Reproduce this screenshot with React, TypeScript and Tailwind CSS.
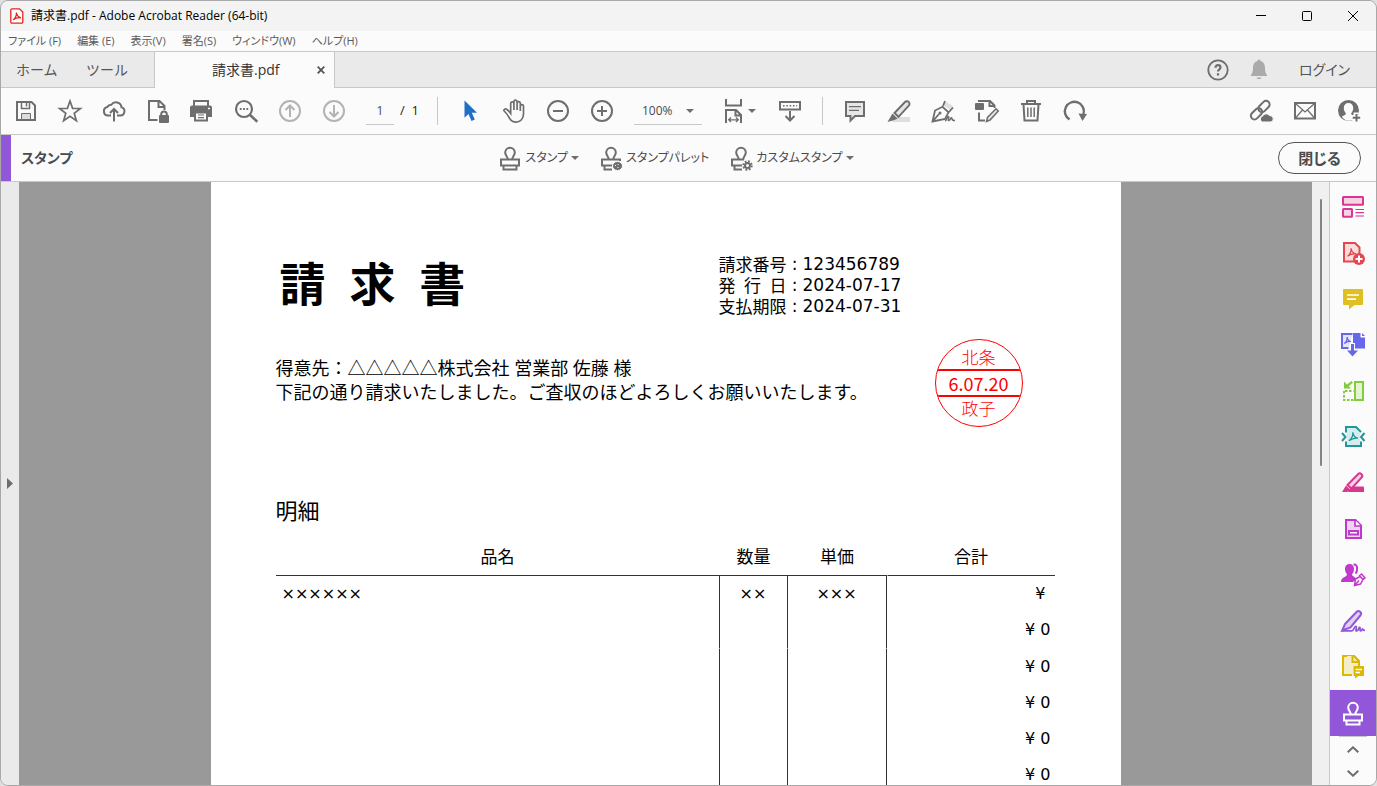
import type { ReactNode } from 'react';

const G = '#6e6e6e';

type IconProps = { children: ReactNode; color?: string; width?: number; size?: string };

function Icon({ children, color = G, width = 2, size = 'size-6' }: IconProps) {
  return (
    <svg viewBox="0 0 24 24" className={`${size} shrink-0 overflow-visible`} fill="none" stroke={color} strokeWidth={width} aria-hidden="true">
      {children}
    </svg>
  );
}

function Caret() {
  return (
    <svg viewBox="0 0 8 4" className="h-1 w-2 shrink-0" fill={G} aria-hidden="true">
      <path d="M0 0h8L4 4z" />
    </svg>
  );
}

function Swirl({ x = 0, y = 0, scale = 1, color }: { x?: number; y?: number; scale?: number; color: string }) {
  return (
    <g transform={`translate(${x} ${y}) scale(${scale})`} stroke={color} strokeWidth={1.3 / scale} fill="none">
      <path d="M1 9.2C3.400 7.600 5 4 4.800 0.800 5.300 4.200 7 6.200 10 6.700 6.800 6.200 3.600 7.200 1 9.200z" />
    </g>
  );
}

function StampBody() {
  return (
    <>
      <path d="M9.700 13.500c0-3-2.500-4-2.500-7a4.800 4.800 0 0 1 9.600 0c0 3-2.500 4-2.500 7" />
      <path d="M3 13.500h18v6H3zM5.500 19.500v4h13v-4" />
    </>
  );
}

const SaveIcon = (
  <Icon>
    <path d="M3 3h14.500L21 6.500V21H3z" />
    <path d="M7.500 3v6.500h8V3M12.500 4v3.500" strokeWidth="1.500" />
    <path d="M7.500 20.500v-6h9v6z" fill="#dcdcdc" strokeWidth="1" />
  </Icon>
);
const StarIcon = (
  <Icon width={1.7}>
    <path d="M12 2l2.600 7.300 7.800.2-6.200 4.700 2.200 7.500-6.400-4.400-6.400 4.400 2.200-7.500-6.200-4.700 7.800-.2z" />
  </Icon>
);
const CloudIcon = (
  <Icon>
    <path d="M9 16.500H6A4.300 4.300 0 0 1 5.300 8a4.500 4.500 0 0 1 4-2.200A5.600 5.600 0 0 1 19.500 8.300 4.200 4.200 0 0 1 18 16.500h-3" />
    <path d="M12 22.500V10.500M8 14l4-4 4 4" />
  </Icon>
);
const DocLockIcon = (
  <Icon>
    <path d="M11.500 21H3V2h10.500l5 5v4M12.500 2.500V8h6" />
    <rect x="13" y="16" width="10" height="8" rx="1" fill={G} stroke="none" />
    <path d="M15.200 16.500v-1.300a2.800 2.800 0 0 1 5.600 0v1.300" />
  </Icon>
);
const PrinterIcon = (
  <Icon>
    <path d="M4 7V2h14v5" />
    <path d="M2 6.500h18a2 2 0 0 1 2 2V18H0V8.500a2 2 0 0 1 2-2z" fill={G} stroke="none" />
    <path d="M5 13.500h12v8H5z" fill="#fbfbfb" />
    <path d="M8 16h6M8 18.700h6" strokeWidth="1.200" />
    <path d="M18 9.500h2" stroke="#fbfbfb" strokeWidth="1.500" />
  </Icon>
);
const SearchIcon = (
  <Icon>
    <circle cx="10" cy="10" r="8" strokeWidth="2.200" />
    <path d="M15.800 15.800l7.500 7" strokeWidth="2.600" />
    <path d="M5.800 10h1.800M9.100 10h1.800M12.400 10h1.800" />
  </Icon>
);
const UpIcon = (
  <Icon color="#b3b3b3">
    <circle cx="12" cy="12" r="10" />
    <path d="M12 18V7M7.500 11L12 6.500l4.500 4.500" />
  </Icon>
);
const DownIcon = (
  <Icon color="#b3b3b3">
    <circle cx="12" cy="12" r="10" />
    <path d="M12 6v11M7.500 13l4.500 4.500 4.500-4.500" />
  </Icon>
);
const CursorIcon = (
  <Icon>
    <path d="M6.500 1.500L19 13.700h-5.200l3 6.800-3.300 1.400-3-6.900-4 3.800z" fill="#1f6fc9" stroke="none" />
  </Icon>
);
const HandIcon = (
  <Icon width={1.7}>
    <path d="M8.700 12V4.500a1.600 1.600 0 0 1 3.200 0V11V2.800a1.600 1.600 0 0 1 3.200 0V11V4.300a1.600 1.600 0 0 1 3.200 0V12V7.300a1.600 1.600 0 0 1 3.200 0V15c0 4.500-3 8.200-7.300 8.200-3.500 0-5.200-1.500-6.500-3.700-1.400-2.500-2.800-5-5.500-7.500-.9-1.200.8-2.600 2.300-1.800 1.800 1 3 2.500 4.200 4.200z" />
  </Icon>
);
const MinusIcon = (
  <Icon>
    <circle cx="12" cy="12" r="10" />
    <path d="M7 12h10" />
  </Icon>
);
const PlusIcon = (
  <Icon>
    <circle cx="12" cy="12" r="10" />
    <path d="M7 12h10M12 7v10" />
  </Icon>
);
const FitIcon = (
  <Icon>
    <path d="M4 0v6.500h15V0" />
    <path d="M4 24V11h10l5 5v8M13.500 11v5.500H19" />
    <path d="M7 20.800h9M9 18.500l-2.300 2.300L9 23M14 18.500l2.300 2.300L14 23" strokeWidth="1.300" />
  </Icon>
);
const KeysIcon = (
  <Icon>
    <rect x="3" y="3" width="20" height="7.500" />
    <path d="M6 6.800h1.600M9.300 6.800h1.600M12.600 6.800h1.600M15.900 6.800h1.600M19.200 6.800h1" strokeWidth="1.600" />
    <path d="M13 12v9.500M8.500 17l4.500 4.500 4.500-4.500" />
  </Icon>
);
const CommentIcon = (
  <Icon>
    <path d="M3 3h18v14h-9l-4.500 4.500V17H3z" fill="#e6e6e6" />
    <path d="M6 7.700h12M6 11.300h10" strokeWidth="1.200" />
  </Icon>
);
const HighlightIcon = (
  <Icon>
    <path d="M7 18h16v5H5z" fill="#dedede" stroke="none" />
    <path d="M7.500 14L18 3a2.600 2.600 0 0 1 3.800 3.600L11.500 17.800z" fill="#e6e6e6" strokeWidth="1.900" />
    <path d="M5.500 14.500l5 5-3 1.500-7 2z" fill={G} stroke="none" />
  </Icon>
);
const SignIcon = (
  <Icon width={1.8}>
    <path d="M14 2l8 5-3 4-7-5z" fill="#e0e0e0" stroke="none" />
    <path d="M1.500 22.500L4 11.500l7.500-3.700 6 5.500L14 20zM2 22l6-7M12 7l2-5M18 13l4-4.500" />
    <circle cx="9" cy="14" r="1.500" fill={G} stroke="none" />
    <path d="M14 22c2-.5 2-5 3.500-4.500S16 22 18 21.500s1.500-3 2.500-2.800-.5 3 3.500 2.800" strokeWidth="1.500" />
  </Icon>
);
const EditDocIcon = (
  <Icon>
    <rect x="0" y="4" width="9" height="7" rx="1" fill={G} stroke="none" />
    <path d="M4 3V2h11l4.500 4.500V9M14.500 2.500V7H19M4 13.500V21.500h6" />
    <path d="M11.500 22.500l1-4L21 9.800l2.300 2.300-8.300 8.900z" fill="#e6e6e6" strokeWidth="1.500" />
  </Icon>
);
const TrashIcon = (
  <Icon>
    <path d="M2 5h20M8 4.500V2h8v2.500M4.500 5.500l1 16h13l1-16" />
    <path d="M8.800 8.500v9.500M12 8.500v9.500M15.200 8.500v9.500" strokeWidth="1.500" />
  </Icon>
);
const RotateIcon = (
  <Icon>
    <path d="M6.500 20.500A9.500 9.500 0 1 1 20.500 15" strokeWidth="2.400" />
    <path d="M15.500 14.500l8.500.5-4.500 7z" fill={G} stroke="none" />
  </Icon>
);
const LinkCloudIcon = (
  <Icon>
    <rect x="-6.500" y="-3.600" width="13" height="7.200" rx="3.600" transform="translate(15 7.500) rotate(-45)" />
    <rect x="-6.500" y="-3.600" width="13" height="7.200" rx="3.600" transform="translate(7.500 14.800) rotate(-45)" />
    <path d="M13.500 23a3 3 0 0 1 0-5.800 4 4 0 0 1 7-.6 3.300 3.300 0 0 1 1.500 6.400z" fill={G} stroke="#fbfbfb" strokeWidth="1" />
  </Icon>
);
const MailIcon = (
  <Icon>
    <rect x="2" y="4" width="20" height="15.500" />
    <path d="M2.500 4.500L12 13l9.500-8.500M2.500 19l7-8M21.500 19l-7-8" strokeWidth="1.200" />
  </Icon>
);
const AccountIcon = (
  <Icon>
    <circle cx="11.500" cy="11.500" r="10.500" fill={G} stroke="none" />
    <path d="M11.500 4c3 0 4.700 2 4.700 5 0 2.500-1 4-2 5.200 0 1.300.5 1.700 4 3.300-1.500 2.700-4 4.200-6.700 4.200S6.300 20.200 4.800 17.500c3.500-1.600 4-2 4-3.300-1-1.200-2-2.700-2-5.200 0-3 1.700-5 4.700-5z" fill="#fbfbfb" stroke="none" />
    <path d="M19 13.500v10M14 18.500h10" stroke="#fbfbfb" strokeWidth="5" />
    <path d="M19.500 15v7.500M15.700 18.700h7.500" strokeWidth="2" />
  </Icon>
);

const leftTools: [string, ReactNode][] = [
  ['保存', SaveIcon],
  ['お気に入り', StarIcon],
  ['アップロード', CloudIcon],
  ['文書を保護', DocLockIcon],
  ['印刷', PrinterIcon],
  ['検索', SearchIcon],
  ['前のページ', UpIcon],
  ['次のページ', DownIcon],
];
const viewTools: [string, ReactNode][] = [
  ['選択', CursorIcon],
  ['手のひら', HandIcon],
  ['縮小', MinusIcon],
  ['拡大', PlusIcon],
];
const editTools: [string, ReactNode][] = [
  ['注釈', CommentIcon],
  ['ハイライト', HighlightIcon],
  ['署名', SignIcon],
  ['編集', EditDocIcon],
  ['削除', TrashIcon],
  ['回転', RotateIcon],
];
const shareTools: [string, ReactNode][] = [
  ['リンクを共有', LinkCloudIcon],
  ['メール', MailIcon],
  ['ユーザーを追加', AccountIcon],
];

const sideTools: [string, ReactNode][] = [
  ['ページを整理', (
    <Icon color="#d83790">
      <rect x="2" y="2" width="20" height="7.700" rx="0.500" fill="#f8d3e6" />
      <rect x="2" y="14" width="9" height="7.700" rx="0.500" fill="#f8d3e6" />
      <path d="M14.500 14.500H23M14.500 17.700H23M14.500 21H23" strokeWidth="1.200" />
    </Icon>
  )],
  ['PDF を作成', (
    <Icon color="#e34850">
      <path d="M3 2h11l4.500 4.500V20.500H3z" fill="#fbdcdd" />
      <Swirl x={5.500} y={6.500} scale={0.95} color="#e34850" />
      <circle cx="18" cy="18" r="6" fill="#e34850" stroke="none" />
      <path d="M18 14.500v7M14.500 18h7" stroke="#fff" />
    </Icon>
  )],
  ['注釈', (
    <Icon color="#dfbf22">
      <path d="M3 2h18a1 1 0 0 1 1 1v14a1 1 0 0 1-1 1h-7.500L8 22.500V18H3a1 1 0 0 1-1-1V3a1 1 0 0 1 1-1z" fill="#dfbf22" stroke="none" />
      <path d="M6 8h12M6 12.200h9" stroke="#fff" strokeWidth="1.700" />
    </Icon>
  )],
  ['ファイルを結合', (
    <Icon color="#6767ec">
      <path d="M7.500 15H1V1h10.500" fill="#e4e4fc" />
      <path d="M12 0h7.500v4.500H24V15.500H12z" fill="#6767ec" stroke="none" />
      <path d="M21 0l3 3h-3z" fill="#6767ec" stroke="none" />
      <Swirl x={2.500} y={3.500} scale={0.750} color="#6767ec" />
      <path d="M11.500 10v8" stroke="#fbfbfb" strokeWidth="5" />
      <path d="M10 11h3v6.500h4L11.500 23.500 6 17.500h4z" fill="#6767ec" stroke="none" />
    </Icon>
  )],
  ['ページの移動', (
    <Icon color="#84cc3f">
      <rect x="14" y="3" width="8" height="18" fill="#e3f4d2" />
      <path d="M3 12v9h9.500M4 12h8.500" strokeDasharray="2.500 1.500" />
      <path d="M3 2.500v7h7L7.800 7.300 12 3.500 10.500 2 6 5.500z" fill="#84cc3f" stroke="none" />
    </Icon>
  )],
  ['PDF を圧縮', (
    <Icon color="#23969a">
      <path d="M5 7.500V2h10l5 5M5 16.500v4.500h15v-4.500" fill="#d3eced" />
      <path d="M6 7h13v10H6z" fill="#d3eced" stroke="none" />
      <path d="M1 8l3.500 4L1 16M23.500 8L20 12l3.500 4" />
      <Swirl x={7} y={6.500} scale={1} color="#23969a" />
    </Icon>
  )],
  ['墨消し', (
    <Icon color="#d83790">
      <path d="M10 15.500h12a1 1 0 0 1 1 1V21H7z" fill="#d83790" stroke="none" />
      <path d="M6.500 14L17 3.200a2.400 2.400 0 0 1 3.500 3.400L10.500 17.500z" fill="#f8d3e6" />
      <path d="M5 14.500l4.500 4.500L6 21H1z" fill="#d83790" stroke="none" />
    </Icon>
  )],
  ['フォームを準備', (
    <Icon color="#c038cc">
      <path d="M5 3h9.500L20 8.500V21H5z" fill="#f0d0f3" />
      <path d="M14 3v6h6" fill="#fbfbfb" strokeWidth="1.700" />
      <rect x="8" y="14" width="9" height="3.500" fill="#fbfbfb" />
    </Icon>
  )],
  ['署名を依頼', (
    <Icon color="#c038cc">
      <path d="M8.500 1c3 0 4.500 2 4.500 5s-1.200 4-2 5.500c0 2 4 2 4 5L12 19H0c0-5 6-5 6-7.500C5.200 10 4 8.500 4 6s1.500-5 4.500-5z" fill="#c038cc" stroke="none" />
      <path d="M12.500 1.500c5-.5 4 7 2 9" />
      <path d="M13.500 22.500l1-6.500 4.500-2.500 3 3-2.500 4.500zM14 22l4-4.500M18 13l2.500-2 3.500 4-2.500 2" fill="#fbfbfb" strokeWidth="1.500" />
    </Icon>
  )],
  ['入力と署名', (
    <Icon color="#9256d9">
      <path d="M4 15L15.500 3a2.300 2.300 0 0 1 3.800 3.500L9.500 18.500 1.200 21.500z" fill="#ded0f5" />
      <path d="M1 21.800h10c2 0 2.500-5 4-4.500s-1.500 5 .8 4.500 1.700-4 3-3.500-.8 3.500 1 3.500 1-2 1.700-1.800.5 1.500 2.500 1.300" strokeWidth="1.700" />
    </Icon>
  )],
  ['注釈用に送信', (
    <Icon color="#dcb900">
      <path d="M11 20H2V1h11l5 5v5" fill="#f5edc8" />
      <path d="M10 18V11h8V6L13 1H6v17z" fill="#f5edc8" stroke="none" />
      <path d="M13 1l5 5.500V11M11.500 1v6H18" />
      <path d="M12.500 11H23v10h-5.500L14 23.500V21h-1.500z" fill="#dcb900" stroke="none" />
      <path d="M14.500 14.500h6.500M14.500 17.500h4.500" stroke="#fff" strokeWidth="1.500" />
    </Icon>
  )],
  ['スタンプ', (
    <Icon color="#ffffff">
      <StampBody />
    </Icon>
  )],
];

function ToolButton({ name, icon }: { name: string; icon: ReactNode }) {
  return (
    <button type="button" aria-label={name} className="flex h-11 w-11 shrink-0 items-center justify-center">
      {icon}
    </button>
  );
}

function TitleBar() {
  return (
    <header className="flex h-[30px] shrink-0 items-center bg-[#f3f3f3] pl-[9px] text-xs text-black">
      <svg viewBox="0 0 14 16" className="h-4 w-3.5" fill="#fff" stroke="#e5231b" strokeWidth="1.300" aria-hidden="true">
        <path d="M2 .8h7.500L12.800 4v10a1.200 1.200 0 0 1-1.200 1.200H2A1.200 1.200 0 0 1 .8 14V2A1.200 1.200 0 0 1 2 .8z" />
        <path d="M3.200 11.800C5 11 7 7 6.300 4.700 7 7.800 8.800 9.400 11 9.800 8.500 9.200 5.500 10 3.200 11.800z" />
      </svg>
      <h1 className="ml-[7px] flex-1">請求書.pdf - Adobe Acrobat Reader (64-bit)</h1>
      <button type="button" aria-label="最小化" className="flex h-full w-[46px] items-center justify-center">
        <svg viewBox="0 0 10 10" className="size-2.5" stroke="#000" aria-hidden="true"><path d="M0 4.500h10" /></svg>
      </button>
      <button type="button" aria-label="最大化" className="flex h-full w-[46px] items-center justify-center">
        <svg viewBox="0 0 10 10" className="size-2.5" fill="none" stroke="#000" aria-hidden="true"><rect x="0.500" y="0.500" width="9" height="9" rx="1" /></svg>
      </button>
      <button type="button" aria-label="ウィンドウを閉じる" className="flex h-full w-[46px] items-center justify-center">
        <svg viewBox="0 0 10 10" className="size-2.5" stroke="#000" aria-hidden="true"><path d="M0 0l10 10M10 0L0 10" /></svg>
      </button>
    </header>
  );
}

function TabBar() {
  return (
    <div className="flex h-9 shrink-0 bg-[#eaeaea] text-[#555]">
      <nav className="flex items-center gap-7 border-b border-[#c8c8c8] pr-7 pl-[15px] text-sm">
        <a href="#home" className="w-[42px] whitespace-nowrap">ホーム</a>
        <a href="#tools" className="w-10 whitespace-nowrap">ツール</a>
      </nav>
      <div className="flex w-[181px] items-center border-x border-[#c8c8c8] bg-[#fbfbfb] pr-[5px] pl-[57px]">
        <span className="flex-1 text-sm text-[#333]">請求書.pdf</span>
        <button type="button" aria-label="タブを閉じる" className="p-1">
          <svg viewBox="0 0 8 8" className="size-2" stroke="#555" strokeWidth="1.800" aria-hidden="true"><path d="M.7.700l6.600 6.600M7.300.700L.7 7.300" /></svg>
        </button>
      </div>
      <div className="flex flex-1 items-center justify-end border-b border-[#c8c8c8] pr-[26px]">
        <button type="button" aria-label="ヘルプ">
          <Icon width={1.8}>
            <circle cx="12" cy="12" r="9.700" />
            <path d="M9.500 9.700c0-1.700 1.100-2.500 2.500-2.500s2.500.8 2.500 2.300c0 1.800-2.500 2-2.500 4.100M12 15.300v2.200" strokeWidth="2.200" />
          </Icon>
        </button>
        <button type="button" aria-label="通知" className="ml-[17px]">
          <Icon color="#aaaaaa">
            <path d="M12 1.500c1 0 1.500.8 1.500 1.500 3.500 1 4.500 4 4.500 7 0 3.500.7 5.500 2.500 8H3.500C5.300 15.500 6 13.500 6 10c0-3 1-6 4.500-7 0-.7.500-1.500 1.500-1.500zM9.500 19.500h5c-.4 2-4.600 2-5 0z" fill="#aaaaaa" stroke="none" />
          </Icon>
        </button>
        <a href="#login" className="ml-7 text-sm [font-feature-settings:'palt']">ログイン</a>
      </div>
    </div>
  );
}

function Toolbar() {
  return (
    <div className="flex h-[47px] shrink-0 items-center border-b border-[#c8c8c8] bg-[#fbfbfb] pr-[5px] pl-[3px] text-xs text-[#4b4b4b]">
      {leftTools.map(([name, icon]) => <ToolButton key={name} name={name} icon={icon} />)}
      <input aria-label="ページ番号" defaultValue="1" className="ml-[10px] h-7 w-7 border-b border-[#c8c8c8] bg-transparent text-center outline-none" />
      <span className="ml-1.5 w-[37px] text-[13px] text-[#222]">/&nbsp;&nbsp;1</span>
      <div className="mr-[10px] h-7 w-px bg-[#c8c8c8]" />
      {viewTools.map(([name, icon]) => <ToolButton key={name} name={name} icon={icon} />)}
      <div className="relative ml-[10px] w-[68px]">
        <select aria-label="表示倍率" className="h-7 w-full appearance-none border-b border-[#c8c8c8] bg-transparent pl-2 outline-none">
          <option>100%</option>
        </select>
        <span className="pointer-events-none absolute inset-y-0 right-2 flex items-center"><Caret /></span>
      </div>
      <button type="button" aria-label="ページ表示" className="ml-[9px] flex h-11 w-14 items-center justify-center gap-[2px]">
        {FitIcon}
        <Caret />
      </button>
      <ToolButton name="ツールバーを固定" icon={KeysIcon} />
      <div className="mr-[10px] ml-[11px] h-7 w-px bg-[#c8c8c8]" />
      {editTools.map(([name, icon]) => <ToolButton key={name} name={name} icon={icon} />)}
      <div className="ml-auto flex">
        {shareTools.map(([name, icon]) => <ToolButton key={name} name={name} icon={icon} />)}
      </div>
    </div>
  );
}

function StampBar() {
  return (
    <div className="flex h-[47px] shrink-0 items-center border-b border-[#c8c8c8] bg-[#fbfbfb] text-[#4b4b4b]">
      <div className="w-[10px] self-stretch bg-[#9256d9]" />
      <h2 className="flex-1 pl-[10px] text-sm font-bold [font-feature-settings:'palt']">スタンプ</h2>
      <div className="mr-[30px] flex gap-5 text-xs whitespace-nowrap [font-feature-settings:'palt']">
        <button type="button" className="flex items-center gap-[3px]">
          <Icon><StampBody /></Icon>
          <span>スタンプ</span>
          <Caret />
        </button>
        <button type="button" className="flex items-center gap-[3px]">
          <Icon>
            <path d="M9.700 13.500c0-3-2.500-4-2.500-7a4.800 4.800 0 0 1 9.600 0c0 3-2.500 4-2.500 7M21 15v-1.500H3v6h10M5.500 19.500v4H13" />
            <ellipse cx="18.500" cy="20" rx="5" ry="4.500" fill={G} stroke="#fbfbfb" strokeWidth="1" />
            <path d="M16 19.500h1M18.500 18.500h1M18.500 21.500h1" stroke="#fbfbfb" strokeWidth="1" />
          </Icon>
          <span>スタンプパレット</span>
        </button>
        <button type="button" className="flex items-center gap-[3px]">
          <Icon>
            <path d="M9.700 13.500c0-3-2.500-4-2.500-7a4.800 4.800 0 0 1 9.600 0c0 3-2.500 4-2.500 7M15 13.500H3v6h10M5.500 19.500v4H13" />
            <circle cx="18.500" cy="19.500" r="2.500" />
            <circle cx="18.500" cy="19.500" r="4.200" strokeDasharray="1.800 1.500" />
          </Icon>
          <span>カスタムスタンプ</span>
          <Caret />
        </button>
      </div>
      <div className="flex flex-1 justify-end pr-[15px]">
        <button type="button" className="h-8 w-[83px] rounded-full border border-[#555] text-[15px] font-bold [font-feature-settings:'palt']">閉じる</button>
      </div>
    </div>
  );
}

const facts = [
  ['請求番号', '123456789'],
  ['発 行 日', '2024-07-17'],
  ['支払期限', '2024-07-31'],
];

const rows = [
  ['××××××', '××', '×××', '¥\u00a0'],
  ['', '', '', '¥ 0'],
  ['', '', '', '¥ 0'],
  ['', '', '', '¥ 0'],
  ['', '', '', '¥ 0'],
  ['', '', '', '¥ 0'],
];

function Invoice() {
  return (
    <article className="relative min-h-full w-[910px] shrink-0 bg-white pt-[72px] pr-[66px] pl-[65px] text-black">
      <div className="grid grid-cols-[443px_1fr] items-start">
        <h2 className="pl-1 text-[46px] leading-[58px] font-bold whitespace-pre">請  求  書</h2>
        <dl className="text-[17px] leading-[21px]">
          {facts.map(([label, value]) => (
            <div key={label} className="flex">
              <dt className="h-[21px] w-[68px] [text-align-last:justify]">{label}</dt>
              <dd className="flex h-[21px] font-['DejaVu_Sans','Noto_Sans_CJK_JP',sans-serif]">
                <span className="w-4 text-center">:</span>
                {value}
              </dd>
            </div>
          ))}
        </dl>
      </div>
      <div className="mt-[39px] text-lg leading-6 whitespace-nowrap">
        <p>得意先：△△△△△株式会社 営業部 佐藤 様</p>
        <p>下記の通り請求いたしました。ご査収のほどよろしくお願いいたします。</p>
      </div>
      <h3 className="mt-[92px] text-[22px] leading-7">明細</h3>
      <table className="mt-[14px] w-full table-fixed border-separate border-spacing-0">
        <colgroup>
          <col />
          <col className="w-[68px]" />
          <col className="w-[99px]" />
          <col className="w-[168px]" />
        </colgroup>
        <thead>
          <tr className="h-[38px] text-[17px]">
            {['品名', '数量', '単価', '合計'].map((head) => (
              <th key={head} className="border-b border-[#333] p-0 font-normal last:border-l last:border-l-white">{head}</th>
            ))}
          </tr>
        </thead>
        <tbody className="font-['DejaVu_Sans','Noto_Sans_CJK_JP',sans-serif] text-base">
          {rows.map(([item, count, price, total], index) => (
            <tr key={index} className={index === 2 ? 'h-[37px] *:border-t *:border-t-white' : 'h-9'}>
              <td className="border-r border-r-[#333] p-0 pl-1.5">{item}</td>
              <td className="border-r border-r-[#333] p-0 text-center">{count}</td>
              <td className="border-r border-r-[#333] p-0 text-center">{price}</td>
              <td className="p-0 pr-1 text-right">{total}</td>
            </tr>
          ))}
        </tbody>
      </table>
      <div className="absolute top-[157px] left-[724px] flex size-[88px] flex-col overflow-hidden rounded-full border border-[#f00] text-center text-[#f00]">
        <span className="h-[29px] pt-2 text-[17px] leading-5 font-light">北条</span>
        <span className="border-y-2 border-[#f00] font-['Noto_Sans_CJK_JP',sans-serif] text-lg leading-6">6.07.20</span>
        <span className="h-[29px] pt-0.5 text-[17px] leading-5 font-light">政子</span>
      </div>
    </article>
  );
}

function SideRail() {
  return (
    <aside className="flex w-[47px] shrink-0 flex-col items-center border-l border-[#c8c8c8] bg-[#fbfbfb] pt-0.5">
      {sideTools.map(([name, icon], index) => (
        <button
          key={name}
          type="button"
          aria-label={name}
          className={`flex h-[46px] w-full shrink-0 items-center justify-center ${index === sideTools.length - 1 ? 'bg-[#9256d9]' : ''}`}
        >
          {icon}
        </button>
      ))}
      <div className="h-px w-7 shrink-0 bg-[#c8c8c8]" />
      <button type="button" aria-label="上へスクロール" className="flex h-6 w-full shrink-0 items-center justify-center">
        <svg viewBox="0 0 12 7" className="h-[7px] w-3" fill="none" stroke={G} strokeWidth="2" aria-hidden="true"><path d="M.7 6.300L6 1.300l5.300 5" /></svg>
      </button>
      <button type="button" aria-label="下へスクロール" className="flex h-6 w-full shrink-0 items-center justify-center">
        <svg viewBox="0 0 12 7" className="h-[7px] w-3" fill="none" stroke={G} strokeWidth="2" aria-hidden="true"><path d="M.7.700L6 5.700l5.300-5" /></svg>
      </button>
    </aside>
  );
}

const menus = ['ファイル (F)', '編集 (E)', '表示(V)', '署名(S)', 'ウィンドウ(W)', 'ヘルプ(H)'];

export default function App() {
  return (
    <div className="h-screen bg-[#e0e0e0]">
      <div className="flex h-full flex-col overflow-hidden rounded-lg border border-[#a8a8a8] font-['Open_Sans','Noto_Sans_CJK_JP',sans-serif]">
        <TitleBar />
        <nav className="flex h-[21px] shrink-0 items-center gap-4 border-b border-[#c8c8c8] bg-[#fbfbfb] pl-[7px] text-[11px] whitespace-nowrap text-[#5a5a5a] [font-feature-settings:'palt']">
          {menus.map((menu) => <button key={menu} type="button">{menu}</button>)}
        </nav>
        <TabBar />
        <Toolbar />
        <StampBar />
        <div className="flex min-h-0 flex-1">
          <button type="button" aria-label="ナビゲーションを開く" className="flex w-[18px] shrink-0 items-center justify-center bg-[#eaeaea]">
            <svg viewBox="0 0 6 11" className="h-[11px] w-1.5" fill={G} aria-hidden="true"><path d="M0 0l6 5.500L0 11z" /></svg>
          </button>
          <main className="flex min-w-0 flex-1 justify-center overflow-hidden bg-[#999]">
            <Invoice />
          </main>
          <div className="flex w-[17px] shrink-0 justify-center bg-[#f0f0f0] pt-[17px]">
            <div className="h-[267px] w-0.5 rounded-full bg-[#858585]" />
          </div>
          <SideRail />
        </div>
      </div>
    </div>
  );
}
